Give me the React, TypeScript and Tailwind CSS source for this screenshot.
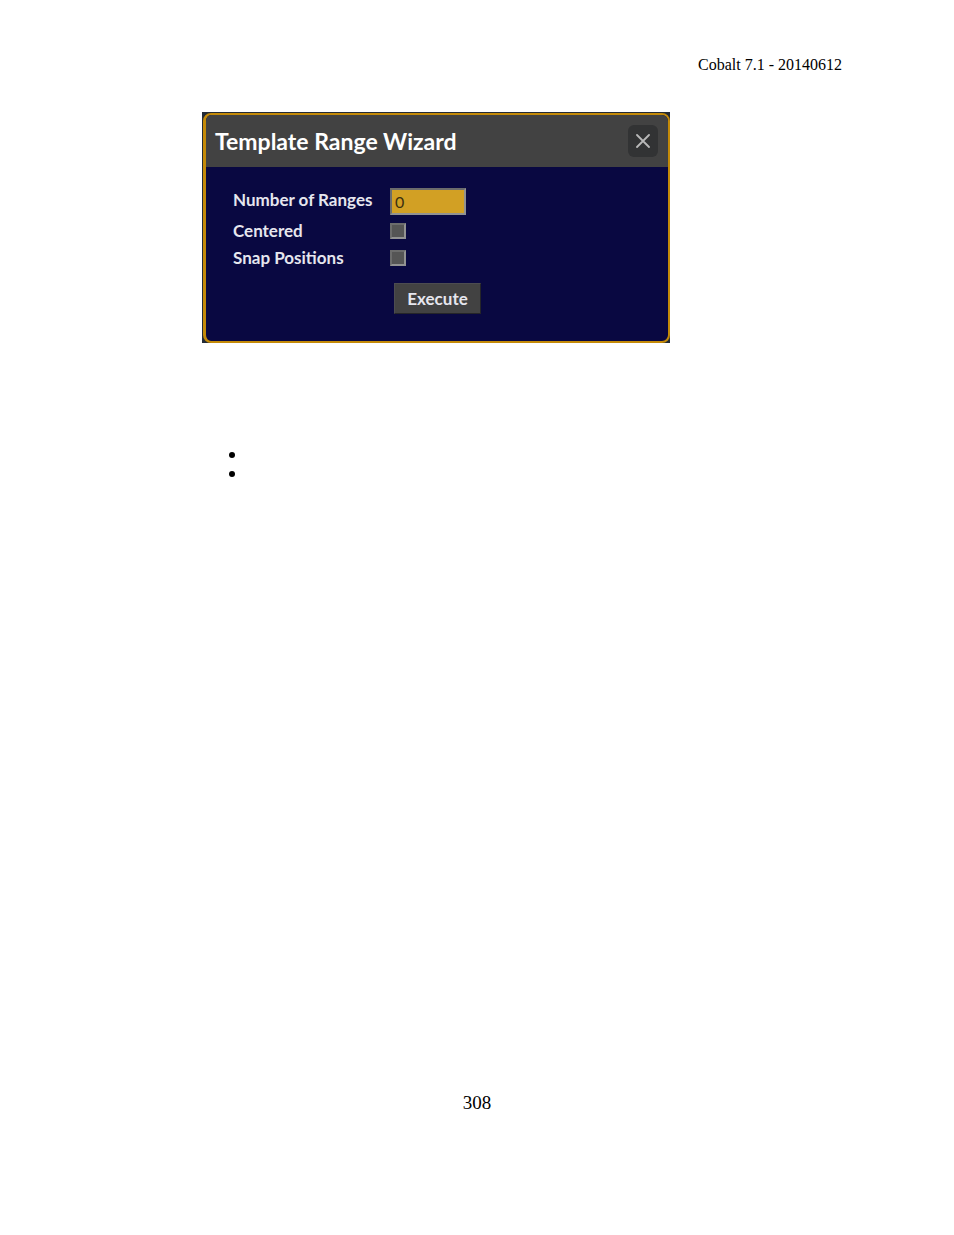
import { useState } from "react";

const Bevel =
  "border-2 border-t-[#6c6c6c] border-l-[#6c6c6c] border-r-[#929292] border-b-[#929292]";

const CheckRow = ({ id, label }: { id: string; label: string }) => (
  <div className="flex items-center h-[27px]">
    <label htmlFor={id} className="w-[157px] pt-px">
      {label}
    </label>
    <input
      id={id}
      type="checkbox"
      className={`appearance-none size-4 bg-[#555555] checked:bg-[#d2a024] ${Bevel}`}
    />
  </div>
);

const RangeWizard = () => {
  const [ranges, setRanges] = useState("0");

  return (
    <div className="w-full max-w-[468px] bg-[#232b36] pl-px pt-px">
      <section className="rounded-lg overflow-hidden border-2 border-l-3 border-[#c48a08] bg-[#090841] text-[#e6e6ee] font-['Lato',sans-serif]">
        <header className="flex items-center justify-between h-[52px] pl-[9px] pr-[10px] bg-[#424242]">
          <h1 className="text-[23px] leading-7 font-bold text-white">
            Template Range Wizard
          </h1>
          <button
            type="button"
            aria-label="Close"
            className="flex items-center justify-center w-[30px] h-8 rounded-md bg-[#323334]"
          >
            <svg
              viewBox="0 0 14 14"
              className="size-[14px]"
              fill="none"
              stroke="#b9b9b9"
              strokeWidth="1.8"
              strokeLinecap="round"
            >
              <path d="M1 1L13 13M13 1L1 13" />
            </svg>
          </button>
        </header>
        <form
          className="pt-[21px] pb-[27px] pl-[27px] text-[17px] leading-5 font-bold"
          onSubmit={(e) => e.preventDefault()}
        >
          <div className="flex items-center mb-0.5">
            <label htmlFor="ranges" className="w-[157px] pb-1">
              Number of Ranges
            </label>
            <input
              id="ranges"
              type="text"
              value={ranges}
              onChange={(e) => setRanges(e.target.value)}
              className={`w-[76px] h-[27px] px-[3px] bg-[#d2a024] text-base text-[#3c3010] font-normal outline-none ${Bevel}`}
            />
          </div>
          <CheckRow id="centered" label="Centered" />
          <CheckRow id="snap" label="Snap Positions" />
          <button
            type="submit"
            className="block mt-3 ml-[161px] w-[87px] h-[31px] pt-px bg-[#424242] border border-t-[#4c4c50] border-l-[#4c4c50] border-r-[#252528] border-b-[#252528]"
          >
            Execute
          </button>
        </form>
      </section>
    </div>
  );
};

export default function App() {
  return (
    <div className="flex flex-col min-h-screen px-28 pt-[55px] pb-[120px] bg-white text-black font-['Liberation_Serif',serif]">
      <header className="text-right text-base leading-5">
        Cobalt 7.1 - 20140612
      </header>
      <main className="grow pl-[90px] pt-[37px]">
        <RangeWizard />
        <ul className="mt-[102px] pl-[27px]">
          <li className="flex items-center h-[19px]">
            <span className="size-1.5 rounded-full bg-black" />
          </li>
          <li className="flex items-center h-[19px]">
            <span className="size-1.5 rounded-full bg-black" />
          </li>
        </ul>
      </main>
      <footer className="text-center text-[19px] leading-6">308</footer>
    </div>
  );
}
